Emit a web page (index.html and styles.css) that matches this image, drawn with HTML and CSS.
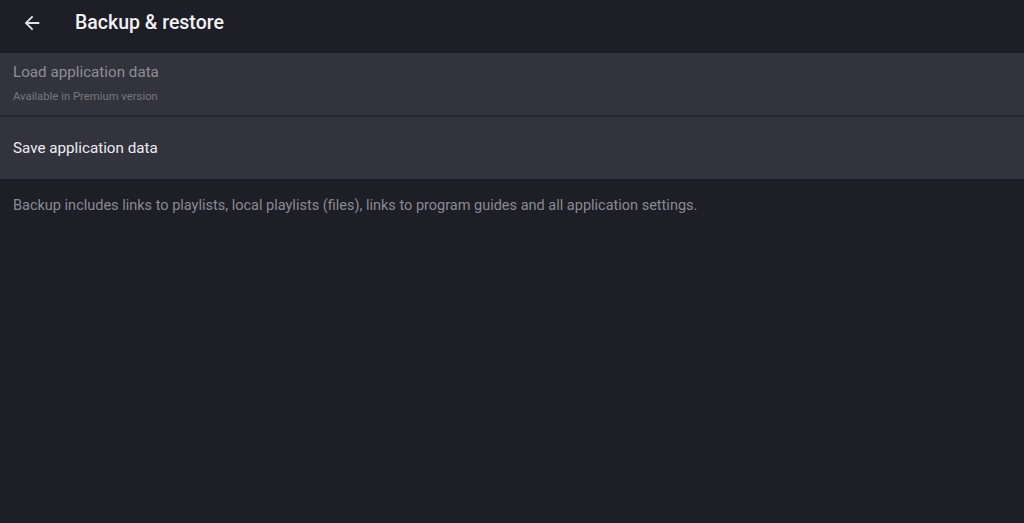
FILE: index.html
```html
<!DOCTYPE html>
<html lang="en">
<head>
    <meta charset="UTF-8">
    <meta name="viewport" content="width=device-width, initial-scale=1.0">
    <title>Backup &amp; restore</title>
    <link rel="stylesheet" href="styles.css">
</head>
<body>
    <div class="toolbar">
        <div class="back-button">
            <svg width="22" height="22" viewBox="0 0 24 24">
                <path d="M20 11H7.83l5.59-5.59L12 4l-8 8 8 8 1.41-1.41L7.83 13H20v-2z" fill="#e4e4e8"/>
            </svg>
        </div>
        <div class="title">Backup &amp; restore</div>
    </div>

    <div class="list">
        <div class="item disabled">
            <div class="item-title">Load application data</div>
            <div class="item-summary">Available in Premium version</div>
        </div>
        <div class="item">
            <div class="item-title">Save application data</div>
        </div>
    </div>

    <div class="note">Backup includes links to playlists, local playlists (files), links to program guides and all application settings.</div>
</body>
</html>
```

FILE: styles.css
```css
* {
    margin: 0;
    padding: 0;
    box-sizing: border-box;
}

body {
    background: #1e1e27;
    font-family: Roboto, 'Noto Sans', sans-serif;
    height: 100vh;
    overflow: hidden;
}

.toolbar {
    height: 53px;
    display: flex;
    align-items: center;
    padding-bottom: 8px;
}

.back-button {
    width: 75px;
    padding-left: 21px;
    display: flex;
    align-items: center;
}

.back-button svg {
    display: block;
}

.title {
    color: #f2f2f4;
    font-size: 19.5px;
    font-weight: 500;
}

.list {
    display: flex;
    flex-direction: column;
    gap: 2px;
    background: #25252d;
}

.item {
    background: #33333d;
    height: 62px;
    padding: 0 13px;
    display: flex;
    flex-direction: column;
    justify-content: center;
}

.item-title {
    color: #ececf0;
    font-size: 15.2px;
}

.item.disabled .item-title {
    color: #8e8e95;
    margin-top: -2px;
}

.item-summary {
    color: #77777e;
    font-size: 11.3px;
    margin-top: 9px;
}

.note {
    color: #8a8a91;
    font-size: 14.5px;
    padding: 17px 13px;
    line-height: 20px;
}
```
